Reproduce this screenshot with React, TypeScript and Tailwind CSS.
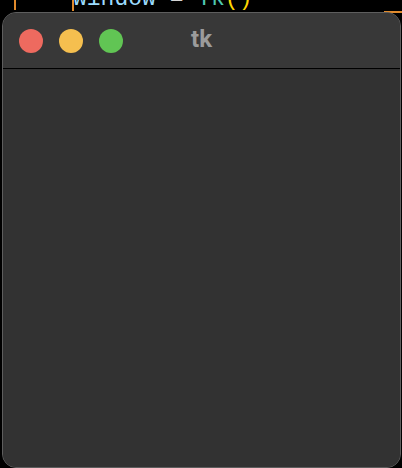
export default function App() {
  return (
    <div className="relative w-[402px] h-[468px] bg-black overflow-hidden">
      {/* code editor behind */}
      <div className="absolute left-0 top-0 w-full h-[12px] overflow-hidden">
        <div className="absolute left-[14px] top-0 w-[2px] h-[10px] bg-[#e08a2c]" />
        <div className="absolute left-[72px] top-0 w-[2px] h-[11px] bg-[#e08a2c]" />
        <div
          className="absolute left-[73px] top-[-15px] whitespace-pre text-[23px] leading-[28px]"
          style={{ fontFamily: '"Liberation Mono", "DejaVu Sans Mono", monospace' }}
        >
          <span className="text-[#9cdcfe]">window</span>
          <span className="text-[#d4d4d4]"> = </span>
          <span className="text-[#4ec9b0]">Tk</span>
          <span className="text-[#ffd700]">()</span>
        </div>
      </div>
      <div className="absolute left-[384px] top-[11px] w-[18px] h-[2px] bg-[#e08a2c]" />
      {/* window */}
      <div className="relative ml-[2px] mt-[12px] w-[399px] h-[456px] rounded-[14px] border border-[#5e5e5e] bg-[#323232] overflow-hidden flex flex-col">
        <div className="relative h-[56px] shrink-0 bg-[#383838] border-b border-black flex items-center pl-[16px] gap-[16px]">
          <div className="w-[24px] h-[24px] rounded-full bg-[#ee6a5f]" />
          <div className="w-[24px] h-[24px] rounded-full bg-[#f5bf4f]" />
          <div className="w-[24px] h-[24px] rounded-full bg-[#61c554]" />
          <div
            className="absolute inset-0 flex items-center justify-center text-[24px] font-bold text-[#9b9b9b] pointer-events-none"
            style={{ fontFamily: 'Roboto, "Liberation Sans", sans-serif' }}
          >
            <span className="pb-[3px]">tk</span>
          </div>
        </div>
        <div className="flex-1 bg-[#323232]" />
      </div>
    </div>
  );
}
